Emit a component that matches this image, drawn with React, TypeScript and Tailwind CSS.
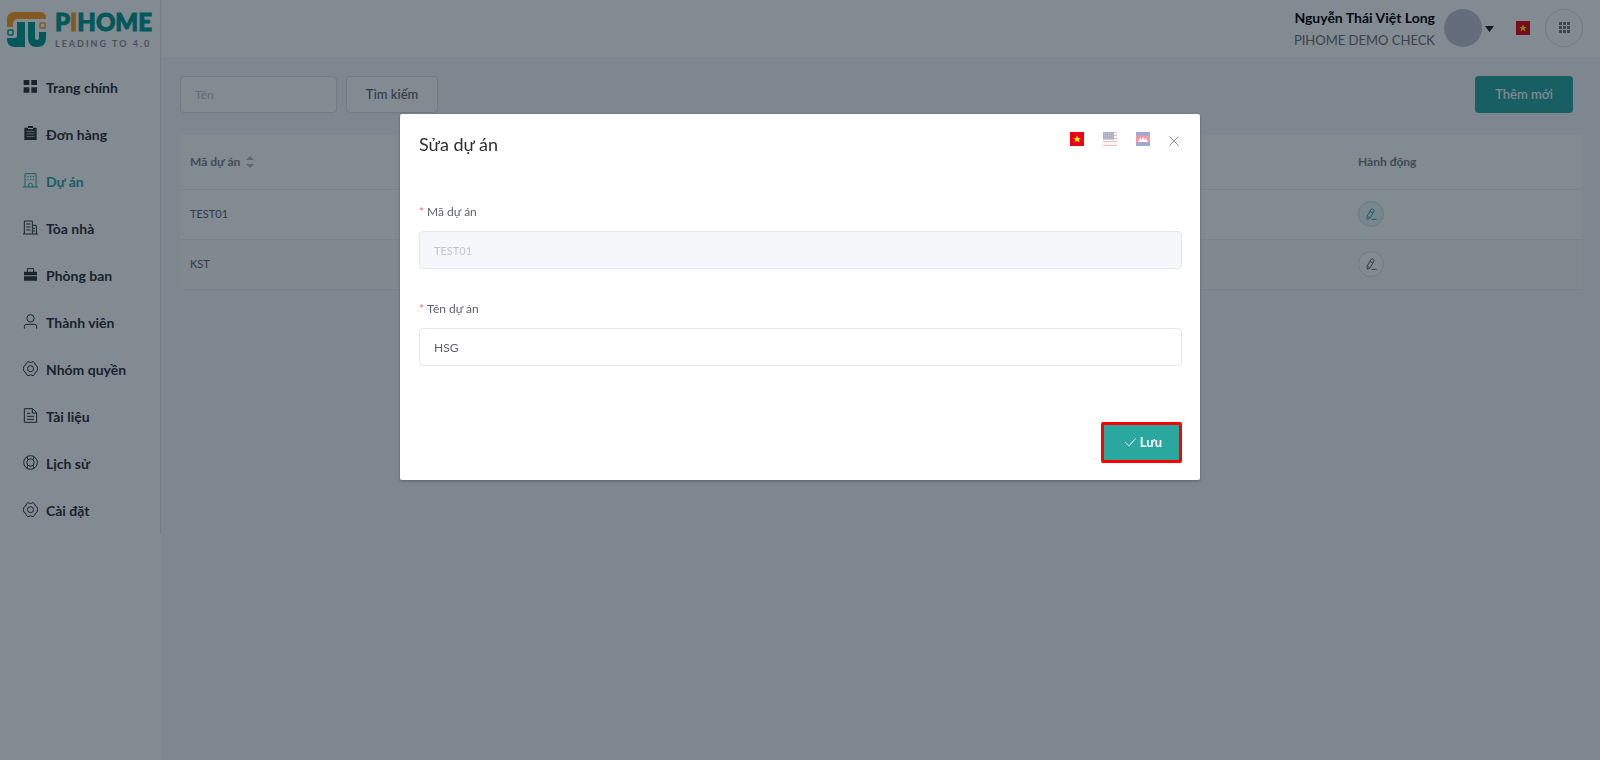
import { useState } from "react"
import type { ReactNode } from "react"

interface MenuItem {
  label: string
  icon: ReactNode
  active?: boolean
}

interface Project {
  code: string
  name: string
}

function MenuIcon({ children }: { children: ReactNode }) {
  return (
    <svg viewBox="0 0 45 45" className="mb-0.5 size-[15px] shrink-0" fill="none" stroke="currentColor" strokeWidth="3" aria-hidden="true">
      {children}
    </svg>
  )
}

const gearIcon = (
  <MenuIcon>
    <path d="M10 6l5-4q7 5 15 0l5 4q1 8 7 9l2 8-2 8q-6 1-7 9l-5 4q-7-5-15 0l-5-4q-1-8-7-9l-2-8 2-8q6-1 7-9z" />
    <circle cx="22.5" cy="23" r="9" />
  </MenuIcon>
)

const menuItems: MenuItem[] = [
  {
    label: "Trang chính",
    icon: (
      <MenuIcon>
        <path d="M2 3h17v15H2zM25 3h17v15H25zM2 25h17v16H2zM25 25h17v16H25z" fill="currentColor" stroke="none" />
      </MenuIcon>
    ),
  },
  {
    label: "Đơn hàng",
    icon: (
      <MenuIcon>
        <path d="M4 5h11v4h15V5h11v37H4zM15 0h15v6H15z" fill="currentColor" stroke="none" />
        <path d="M11 16h23M11 24h23M11 32h23" stroke="#fff" strokeWidth="2" />
      </MenuIcon>
    ),
  },
  {
    label: "Dự án",
    active: true,
    icon: (
      <MenuIcon>
        <path d="M0 42h45M6 42V2h33v40M17 42v-6a5 5 0 0 1 11 0v6M13 11h4M21 11h4M29 11h4M13 20h4M21 20h4M29 20h4" />
      </MenuIcon>
    ),
  },
  {
    label: "Tòa nhà",
    icon: (
      <MenuIcon>
        <path d="M0 42h45M4 42V3h24v39M28 16h12v26M10 12h12M10 21h12M10 30h12M30 25h6M30 33h6" />
      </MenuIcon>
    ),
  },
  {
    label: "Phòng ban",
    icon: (
      <MenuIcon>
        <path d="M13 15V5h19v10" />
        <path d="M3 14h39v11H3zM3 28h39v13H3z" fill="currentColor" stroke="none" />
      </MenuIcon>
    ),
  },
  {
    label: "Thành viên",
    icon: (
      <MenuIcon>
        <circle cx="22.5" cy="13" r="11" />
        <path d="M4 44v-6q0-7 7-7h23q7 0 7 7v6" />
      </MenuIcon>
    ),
  },
  { label: "Nhóm quyền", icon: gearIcon },
  {
    label: "Tài liệu",
    icon: (
      <MenuIcon>
        <path d="M4 2h25l12 12v29H4zM28 2v13h13M12 16h10M12 25h21M12 34h21" />
      </MenuIcon>
    ),
  },
  {
    label: "Lịch sử",
    icon: (
      <MenuIcon>
        <circle cx="22.5" cy="22.5" r="20.5" />
        <circle cx="22.5" cy="22.5" r="11" />
        <path d="M15 14 12 5M30 14l3-9M15 31l-3 9M30 31l3 9" />
      </MenuIcon>
    ),
  },
  { label: "Cài đặt", icon: gearIcon },
]

const projects: Project[] = [
  { code: "TEST01", name: "HSG" },
  { code: "KST", name: "KST" },
]

function Logo() {
  return (
    <a href="#" aria-label="PIHOME" className="flex h-[57px] items-center pl-[7px]">
      <svg viewBox="0 -10 150 56" className="h-14 w-[150px]" aria-hidden="true">
        <path d="M0 16V9q0-8 8-8h25q6 0 6 6v1H11q-5 0-5 5v3z" fill="#ff9f1c" />
        <path d="M10 11h8v25H8q-8 0-8-8v-1h8q2 0 2-2z" fill="#009a8f" />
        <path d="M21 11h7v16q0 2 2 2 2 0 2-2v-6h7v6q0 9-9 9t-9-9z" fill="#009a8f" />
        <rect x="1" y="19" width="5" height="5" rx="1" fill="none" stroke="#009a8f" strokeWidth="1.5" />
        <rect x="33" y="12" width="5" height="5" rx="1" fill="none" stroke="#ff9f1c" strokeWidth="1.5" />
        <text x="48" y="20" fontSize="24" fontWeight="900" fontFamily="Lato, sans-serif" fill="#009a8f" stroke="#009a8f" strokeWidth="1">
          P<tspan fill="#ff9f1c" stroke="#ff9f1c">I</tspan>HOME
        </text>
        <text x="48" y="36" fontSize="9" fontWeight="700" letterSpacing="2" fontFamily="Lato, sans-serif" fill="#8f8f8f">
          LEADING TO 4.0
        </text>
      </svg>
    </a>
  )
}

function VietnamFlag() {
  return (
    <svg viewBox="0 0 14 14" className="size-3.5" aria-hidden="true">
      <path d="M0 0h14v14H0z" fill="#ec0015" />
      <path d="m7 3.200 1 2.700h2.800L8.600 7.600l.8 2.800L7 8.800l-2.400 1.600.8-2.800-2.200-1.700H6z" fill="#ff0" />
    </svg>
  )
}

function UsaFlag() {
  return (
    <svg viewBox="0 0 14 14" className="size-3.5" aria-hidden="true">
      <path d="M0 0h14v14H0z" fill="#f7dfe1" />
      <path d="M0 .5h14M0 3.500h14M0 6.500h14M0 9.500h14M0 13.500h14" stroke="#d0606a" />
      <path d="M0 0h11v7.500H0z" fill="#2b406f" />
      <path d="M1 1.500h9M1 3.700h9M1 5.900h9" stroke="#aab3c8" strokeWidth=".7" strokeDasharray=".7 1.300" />
    </svg>
  )
}

function CambodiaFlag() {
  return (
    <svg viewBox="0 0 14 14" className="size-3.5" aria-hidden="true">
      <path d="M0 0h14v14H0z" fill="#032ea1" />
      <path d="M0 3.500h14v7H0z" fill="#e00025" />
      <path d="M2.500 10V8.500h1V6.500l.7-.8.7.8v1h1V6.500L7 5.200l1.100 1.300v1h1v-1l.7-.8.7.8v2h1V10z" fill="#fff" />
    </svg>
  )
}

function EditIcon() {
  return (
    <svg viewBox="0 0 33 36" className="h-3 w-[11px]" fill="none" stroke="currentColor" strokeWidth="3" aria-hidden="true">
      <path d="M15 5q2-4 5-2l2 1q4 2 2 5L12 30l-8 4-1-9zM12 10l8 5M4 24l7 5M17 34h15" />
    </svg>
  )
}

function Sidebar() {
  return (
    <aside className="w-[161px] shrink-0 bg-white">
      <div className="border-r border-[#e3e5e8]">
        <Logo />
        <nav className="pt-[7px]">
          {menuItems.map((item) => (
            <a
              key={item.label}
              href="#"
              className={`flex h-[47px] items-center gap-2 pl-[23px] text-sm font-bold ${item.active ? "text-[#2aa8a0]" : "text-[#303133]"}`}
            >
              {item.icon}
              {item.label}
            </a>
          ))}
        </nav>
      </div>
    </aside>
  )
}

function Header() {
  return (
    <header className="flex h-[57px] items-center justify-end bg-white pr-[17px] pb-0.5">
      <div className="mr-[9px] pt-0.5 text-right">
        <div className="text-sm leading-[22px] font-bold text-black">Nguyễn Thái Việt Long</div>
        <div className="text-[13px] leading-[22px] text-[#707070]">PIHOME DEMO CHECK</div>
      </div>
      <button type="button" aria-label="Tài khoản" className="flex items-center gap-[3px]">
        <span className="size-[38px] rounded-full bg-[#c3c5d0]" />
        <svg viewBox="0 0 9 6" className="mt-0.5 h-1.5 w-[9px]" aria-hidden="true">
          <path d="M0 0h9L4.500 6z" fill="#222" />
        </svg>
      </button>
      <button type="button" aria-label="Tiếng Việt" className="ml-[22px]">
        <VietnamFlag />
      </button>
      <button type="button" aria-label="Ứng dụng" className="ml-[15px] flex size-[38px] items-center justify-center rounded-full border border-[#dcdfe6]">
        <svg viewBox="0 0 11 11" className="size-[11px]" aria-hidden="true">
          <path d="M0 0h3v3H0zM4 0h3v3H4zM8 0h3v3H8zM0 4h3v3H0zM4 4h3v3H4zM8 4h3v3H8zM0 8h3v3H0zM4 8h3v3H4zM8 8h3v3H8z" fill="#777" />
        </svg>
      </button>
    </header>
  )
}

function ProjectTable() {
  return (
    <table className="mt-[22px] w-full table-fixed border-collapse bg-white text-left text-[11px] text-[#606266]">
      <thead>
        <tr className="h-[54px] border-b border-[#ebeef5] text-xs text-[#7b7e85]">
          <th scope="col" className="px-2.5 font-bold">
            <button type="button" className="flex items-center gap-1.5">
              Mã dự án
              <svg viewBox="0 0 8 12" className="h-3 w-2" aria-hidden="true">
                <path d="M0 4h8L4 0zM0 8h8l-4 4z" fill="#b4b8c0" />
              </svg>
            </button>
          </th>
          <th scope="col" className="px-2.5 font-bold">Tên dự án</th>
          <th scope="col" className="w-[234px] px-2.5 font-bold">Hành động</th>
        </tr>
      </thead>
      <tbody>
        {projects.map((project, index) => (
          <tr key={project.code} className="h-[50px] border-b border-[#ebeef5] even:bg-[#fafafa]">
            <td className="px-2.5">{project.code}</td>
            <td className="px-2.5">{project.name}</td>
            <td className="px-2.5">
              <button
                type="button"
                aria-label={`Sửa ${project.code}`}
                className={`flex size-[26px] items-center justify-center rounded-full border ${
                  index === 0 ? "border-[#bfe5e3] bg-[#eaf6f6] text-[#2aa8a0]" : "border-[#dcdfe6] bg-white text-[#606266]"
                }`}
              >
                <EditIcon />
              </button>
            </td>
          </tr>
        ))}
      </tbody>
    </table>
  )
}

function EditDialog() {
  const [name, setName] = useState("HSG")

  return (
    <div className="fixed inset-0 z-10 bg-[#051525]/50 pt-[15vh]">
      <form role="dialog" aria-labelledby="dialog-title" className="mx-auto w-1/2 rounded-xs bg-white pr-[18px] pb-[17px] pl-[19px] shadow-[0_1px_3px_rgba(0,0,0,0.3)]">
        <div className="flex items-start justify-between pt-[18px]">
          <h2 id="dialog-title" className="text-lg leading-6 text-[#303133]">Sửa dự án</h2>
          <div className="mr-[3px] flex items-center gap-[19px]">
            <button type="button" aria-label="Tiếng Việt"><VietnamFlag /></button>
            <button type="button" aria-label="English" className="opacity-40"><UsaFlag /></button>
            <button type="button" aria-label="ភាសាខ្មែរ" className="opacity-40"><CambodiaFlag /></button>
            <button type="button" aria-label="Đóng">
              <svg viewBox="0 0 10 10" className="mt-1 size-2.5" stroke="#909399" aria-hidden="true">
                <path d="m.5.5 9 9M9.500.5l-9 9" />
              </svg>
            </button>
          </div>
        </div>

        <label htmlFor="project-code" className="mt-[46px] flex h-5 items-center gap-[3px] text-xs text-[#606266]">
          <span className="text-[#f56c6c]">*</span>
          Mã dự án
        </label>
        <input
          id="project-code"
          disabled
          value="TEST01"
          className="mt-[9px] block h-[38px] w-full rounded-sm border border-[#e4e7ed] bg-[#f5f7fa] px-3.5 text-[11px] text-[#c0c4cc]"
        />

        <label htmlFor="project-name" className="mt-[30px] flex h-5 items-center gap-[3px] text-xs text-[#606266]">
          <span className="text-[#f56c6c]">*</span>
          Tên dự án
        </label>
        <input
          id="project-name"
          value={name}
          onChange={(e) => setName(e.target.value)}
          className="mt-[9px] block h-[38px] w-full rounded-sm border border-[#e4e7ed] bg-white px-3.5 text-xs text-[#606266]"
        />

        <div className="mt-14 flex justify-end">
          <button
            type="button"
            className="flex h-[41px] w-[81px] items-center justify-center gap-1 rounded-xs border-3 border-[#f00] bg-[#2aa8a0] pl-1 text-[13px] font-bold text-white"
          >
            <svg viewBox="0 0 11 9" className="h-[9px] w-[11px]" fill="none" stroke="currentColor" aria-hidden="true">
              <path d="m.5 4.500 3.500 3.500 6.500-7.500" />
            </svg>
            Lưu
          </button>
        </div>
      </form>
    </div>
  )
}

export default function App() {
  return (
    <div className="flex min-h-screen bg-[#f7f8fa] font-['Lato','Open_Sans',sans-serif]">
      <Sidebar />
      <div className="min-w-0 flex-1">
        <Header />
        <main className="pt-[19px] pr-[18px] pl-[19px]">
          <div className="flex items-center gap-[9px]">
            <input
              aria-label="Tên"
              placeholder="Tên"
              className="h-[37px] w-[157px] rounded-sm border border-[#dcdfe6] bg-white px-3.5 text-xs placeholder:text-[#c0c4cc]"
            />
            <button type="button" className="h-[37px] w-[92px] rounded-sm border border-[#dcdfe6] bg-white text-[13px] font-medium text-[#606266]">
              Tìm kiếm
            </button>
            <button type="button" className="mr-[9px] ml-auto h-[37px] w-[98px] rounded-sm bg-[#2aa8a0] text-[13px] font-medium text-white">
              Thêm mới
            </button>
          </div>
          <ProjectTable />
        </main>
      </div>
      <EditDialog />
    </div>
  )
}
